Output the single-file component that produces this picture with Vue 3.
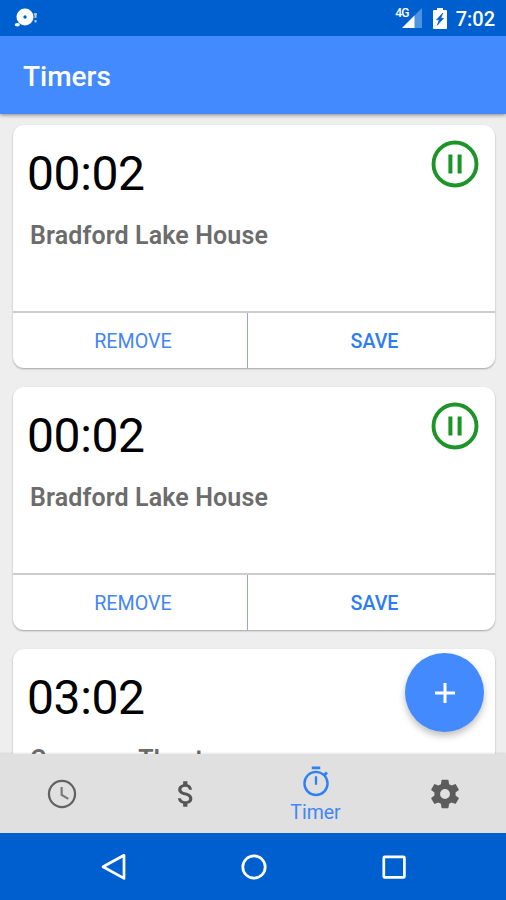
<script setup>
const timers = [
  { time: '00:02', name: 'Bradford Lake House' },
  { time: '00:02', name: 'Bradford Lake House' },
  { time: '03:02', name: 'Cameron Theater' },
]
</script>

<template>
  <div class="screen">
    <div class="status">
      <svg class="notice" width="24" height="22" viewBox="0 0 24 22">
        <circle cx="11" cy="10" r="8.5" fill="#fff" />
        <circle cx="11" cy="10" r="1.7" fill="#005fce" />
        <ellipse cx="3.3" cy="17.8" rx="2.6" ry="1.8" fill="#fff" />
        <path d="M20 7.2h3M21.5 6v5M21.5 13v2.5" stroke="#a9c9f5" stroke-width="2" />
      </svg>
      <div class="indicators">
        <span class="network">4G</span>
        <svg class="signal" width="20" height="20" viewBox="0 0 20 20">
          <path d="M0 20L20 0V20Z" fill="#4f93e2" />
          <path d="M0 20L12.5 7.5V20Z" fill="#fff" />
        </svg>
        <svg class="battery" width="14" height="21" viewBox="0 0 14 21">
          <path d="M4 0h6v2h3q1 0 1 1v17q0 1-1 1H1q-1 0-1-1V3q0-1 1-1h3z" fill="#fff" />
          <path d="M9.8 5L3.6 11.8h2.8L4.2 17.3l6.3-7H7.7z" fill="#005fce" stroke="#005fce" stroke-width=".7" />
        </svg>
        <span class="clock">7:02</span>
      </div>
    </div>
    <header class="header"><h1>Timers</h1></header>
    <main class="list">
      <article v-for="(timer, i) in timers" :key="i" class="card">
        <div class="body">
          <div>
            <div class="time">{{ timer.time }}</div>
            <div class="name">{{ timer.name }}</div>
          </div>
          <svg v-if="i < 2" class="pause" width="48" height="48" viewBox="0 0 48 48">
            <circle cx="24" cy="24" r="21.5" fill="none" stroke="#1d9427" stroke-width="3.9" />
            <path d="M19.4 14.5v19M28.6 14.5v19" stroke="#1d9427" stroke-width="4" />
          </svg>
        </div>
        <div class="actions">
          <button class="remove">REMOVE</button>
          <span class="divider"></span>
          <button class="save">SAVE</button>
        </div>
      </article>
      <button class="fab" aria-label="Add">
        <svg width="22" height="22" viewBox="0 0 22 22">
          <path d="M11 1v20M1 11h20" stroke="#fff" stroke-width="3" />
        </svg>
      </button>
    </main>
    <nav class="tabs">
      <div class="tab first">
        <svg width="34" height="34" viewBox="0 0 24 24" fill="#626262">
          <path d="M12 2a10 10 0 1 0 0 20 10 10 0 0 0 0-20zm0 18.4a8.4 8.4 0 1 1 0-16.8 8.4 8.4 0 0 1 0 16.8z" />
          <path d="M12.5 7H11v6l5.1 3 .75-1.2-4.35-2.6z" fill="#777" />
        </svg>
      </div>
      <div class="tab second">
        <svg width="34" height="34" viewBox="0 0 24 24" fill="#555">
          <path d="M11.8 10.9c-2.27-.59-3-1.2-3-2.15 0-1.09 1.01-1.85 2.7-1.85 1.78 0 2.44.85 2.5 2.1h2.21c-.07-1.72-1.12-3.3-3.21-3.81V3h-3v2.16c-1.94.42-3.5 1.68-3.5 3.61 0 2.31 1.91 3.46 4.7 4.13 2.5.6 3 1.48 3 2.41 0 .69-.49 1.79-2.7 1.79-2.06 0-2.87-.92-2.98-2.1h-2.2c.12 2.19 1.76 3.42 3.68 3.83V21h3v-2.15c1.95-.37 3.5-1.5 3.5-3.55 0-2.84-2.43-3.81-4.7-4.4z" />
        </svg>
      </div>
      <div class="tab third">
        <svg width="34" height="34" viewBox="0 0 24 24" fill="#2f7ff5">
          <path d="M15 1H9v2h6V1zm-3.8 13h1.6V8h-1.6v6zm7.83-6.61l1.42-1.42c-.43-.51-.9-.99-1.41-1.41l-1.42 1.42A8.96 8.96 0 0 0 12 4a9 9 0 1 0 9 9c0-2.12-.74-4.07-1.97-5.61zM12 20.3a7.3 7.3 0 1 1 0-14.6 7.3 7.3 0 0 1 0 14.6z" />
        </svg>
        <span>Timer</span>
      </div>
      <div class="tab fourth">
        <svg width="34" height="34" viewBox="0 0 24 24" fill="#5c5c5c">
          <path d="M19.43 12.98c.04-.32.07-.64.07-.98s-.03-.66-.07-.98l2.11-1.65c.19-.15.24-.42.12-.64l-2-3.46c-.12-.22-.39-.3-.61-.22l-2.49 1c-.52-.4-1.08-.73-1.69-.98l-.38-2.65A.49.49 0 0 0 14 2h-4c-.25 0-.46.18-.49.42l-.38 2.65c-.61.25-1.17.59-1.69.98l-2.49-1c-.23-.09-.49 0-.61.22l-2 3.46c-.13.22-.07.49.12.64l2.11 1.65c-.04.32-.07.65-.07.98s.03.66.07.98l-2.11 1.65c-.19.15-.24.42-.12.64l2 3.46c.12.22.39.3.61.22l2.49-1c.52.4 1.08.73 1.69.98l.38 2.65c.03.24.24.42.49.42h4c.25 0 .46-.18.49-.42l.38-2.65c.61-.25 1.17-.59 1.69-.98l2.49 1c.23.09.49 0 .61-.22l2-3.46c.12-.22.07-.49-.12-.64l-2.11-1.65zM12 15.5a3.5 3.5 0 1 1 0-7 3.5 3.5 0 0 1 0 7z" />
        </svg>
      </div>
    </nav>
    <div class="system">
      <svg width="28" height="28" viewBox="0 0 28 28"><path d="M24 2.3V25.4L3 13.8Z" /></svg>
      <svg width="28" height="28" viewBox="0 0 28 28"><circle cx="14" cy="14" r="11.2" /></svg>
      <svg width="28" height="28" viewBox="0 0 28 28"><rect x="3.8" y="3.8" width="20.6" height="20.6" rx="1" /></svg>
    </div>
  </div>
</template>

<style>
body { margin: 0; }
</style>

<style scoped>
.screen {
  width: 506px;
  height: 900px;
  display: flex;
  flex-direction: column;
  overflow: hidden;
  background: #eee;
  font-family: Roboto, sans-serif;
}
.status {
  height: 36px;
  flex: none;
  box-sizing: border-box;
  padding: 0 11px 0 14px;
  display: flex;
  justify-content: space-between;
  background: #005fce;
  color: #fff;
  z-index: 3;
}
.notice { margin-top: 7px; }
.indicators { display: flex; }
.network { font-size: 12px; font-weight: 500; line-height: 14px; margin-top: 6px; letter-spacing: -.8px; }
.signal { margin: 8px 0 0 -7px; }
.battery { margin: 8px 9px 0 11px; }
.clock { font-size: 20px; font-weight: 500; line-height: 38px; }
.header {
  height: 78px;
  flex: none;
  display: flex;
  align-items: center;
  padding-left: 23px;
  background: #448aff;
  color: #fff;
  box-shadow: 0 1px 4px rgba(0, 0, 0, .45);
  z-index: 2;
}
h1 { margin: 3px 0 0; font-size: 28px; font-weight: 500; line-height: 32px; }
.list {
  position: relative;
  height: 640px;
  flex: none;
  box-sizing: border-box;
  overflow: hidden;
  padding: 11px 11px 0 13px;
  display: flex;
  flex-direction: column;
  gap: 19px;
}
.card {
  height: 243px;
  flex: none;
  display: flex;
  flex-direction: column;
  border-radius: 11px;
  background: #fff;
  box-shadow: 0 1px 2px rgba(0, 0, 0, .32);
}
.body {
  height: 186px;
  display: flex;
  justify-content: space-between;
  padding: 0 16px 0 14px;
}
.time { margin-top: 21px; font-size: 48px; line-height: 56px; letter-spacing: -.4px; color: #000; }
.name { margin: 19px 0 0 3px; font-size: 25px; font-weight: 600; line-height: 30px; letter-spacing: .12px; color: #6c6c6c; }
.pause { margin-top: 15px; }
.actions { display: flex; height: 55px; border-top: 2px solid #ccc; }
button { border: 0; padding: 0; margin: 0; background: none; font-family: inherit; color: #2d7cf6; }
.remove,
.save { padding: 2px 0 0 6px; font-size: 19.7px; }
.remove { width: 234px; box-sizing: border-box; color: #4285f6; }
.divider { width: 1px; background: #8aa6ff; }
.save { flex: 1; font-weight: 500; }
.fab {
  position: absolute;
  right: 22px;
  top: 539px;
  width: 79px;
  height: 79px;
  display: flex;
  align-items: center;
  justify-content: center;
  border-radius: 50%;
  background: #448aff;
  box-shadow: 0 4px 7px rgba(0, 0, 0, .25);
}
.tabs {
  height: 79px;
  flex: none;
  display: grid;
  grid-template-columns: 124px 123px 137px 121px;
  background: #e0e0e0;
  box-shadow: 0 -1px 2px rgba(0, 0, 0, .1);
  z-index: 2;
}
.tab { display: flex; flex-direction: column; align-items: center; justify-content: center; }
.third { justify-content: flex-start; padding-top: 11px; }
.third span { margin-top: 3px; font-size: 19.5px; line-height: 22px; color: #4386f4; }
.system {
  height: 67px;
  flex: none;
  display: flex;
  align-items: center;
  justify-content: center;
  gap: 112px;
  padding-left: 1px;
  background: #005fce;
}
.system path, .system circle, .system rect { fill: none; stroke: #fff; stroke-width: 2.7; stroke-linejoin: round; }
</style>
